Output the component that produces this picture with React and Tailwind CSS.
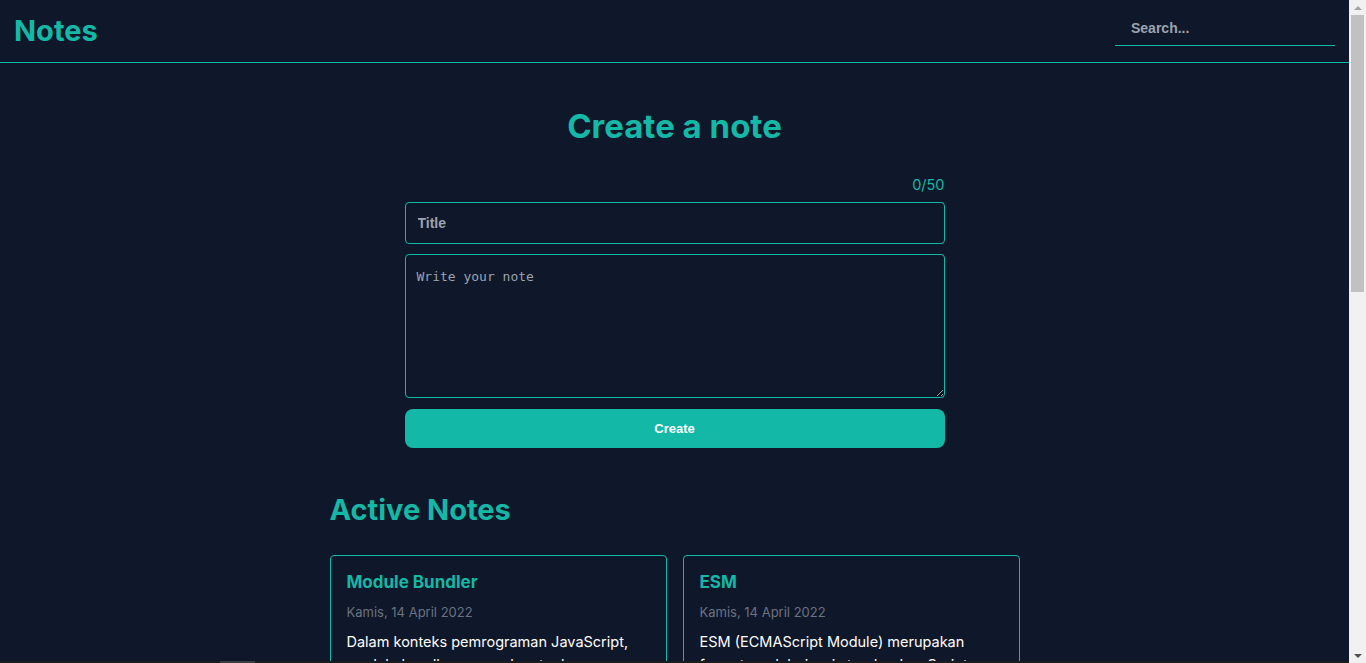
import React from "react";

const notes = [
  {
    title: "Module Bundler",
    date: "Kamis, 14 April 2022",
    body: "Dalam konteks pemrograman JavaScript, module bundler merupakan tools yang digunakan untuk menggabungkan seluruh modul JavaScript yang digunakan oleh aplikasi menjadi satu berkas.",
  },
  {
    title: "ESM",
    date: "Kamis, 14 April 2022",
    body: "ESM (ECMAScript Module) merupakan format modularisasi standar JavaScript.",
  },
  {
    title: "Functional Component",
    date: "Kamis, 14 April 2022",
    body: "Functional component merupakan React component yang dibuat menggunakan fungsi JavaScript. Agar fungsi JavaScript dapat disebut component ia harus mengembalikan React element dan dipanggil layaknya React component.",
  },
  {
    title: "Lifecycle",
    date: "Kamis, 14 April 2022",
    body: "Dalam konteks React component, lifecycle merupakan kumpulan method yang menjadi siklus hidup mulai dari component dibuat (constructor), dicetak (render), pasca-cetak (componentDidMount), dan sebagainya.",
  },
];

function Scrollbar() {
  return (
    <div className="flex h-full w-[17px] shrink-0 flex-col items-center bg-[#f1f1f1]">
      <div className="flex h-[15px] w-full items-center justify-center">
        <div className="h-0 w-0 border-x-[4px] border-b-[4px] border-x-transparent border-b-[#a3a3a3]" />
      </div>
      <div className="h-[277px] w-[13px] bg-[#c1c1c1]" />
      <div className="flex-1" />
      <div className="flex h-[15px] w-full items-center justify-center">
        <div className="h-0 w-0 border-x-[4px] border-t-[4px] border-x-transparent border-t-[#505050]" />
      </div>
    </div>
  );
}

export default function App() {
  return (
    <div className="relative flex h-screen overflow-hidden bg-[#0f172a] font-['Inter',sans-serif]">
      <div className="min-w-0 flex-1 overflow-hidden">
        <header className="flex h-[63px] items-center justify-between border-b border-[#14b8a6] px-[14px]">
          <h1 className="text-[29px] font-bold text-[#14b8a6]">Notes</h1>
          <input
            type="text"
            placeholder="Search..."
            className="mt-[-5px] h-[34px] w-[220px] border-0 border-b border-solid border-[#14b8a6] bg-transparent px-4 font-['Liberation_Sans',sans-serif] text-[14px] font-bold text-white outline-none placeholder:text-[#9ca3af]"
          />
        </header>

        <main className="flex flex-col items-center">
          <h2 className="mt-[43px] text-[33px] font-bold leading-[40px] text-[#14b8a6]">
            Create a note
          </h2>
          <div className="mt-[29px] flex w-[540px] flex-col">
            <p className="text-right text-[14.5px] leading-[20px] text-[#14b8a6]">0/50</p>
            <input
              type="text"
              placeholder="Title"
              className="mt-[7px] h-[42px] rounded-[4px] border border-[#14b8a6] bg-transparent px-3 font-['Liberation_Sans',sans-serif] text-[14px] font-bold text-white outline-none placeholder:text-[#9ca3af]"
            />
            <textarea
              placeholder="Write your note"
              className="mt-[10px] h-[144px] rounded-[4px] border border-[#14b8a6] bg-transparent px-[11px] py-[12px] font-['DejaVu_Sans_Mono',monospace] text-[13px] text-white outline-none placeholder:text-[#9ca3af]"
            />
            <button className="mt-[11px] h-[39px] rounded-[8px] bg-[#14b8a6] font-['Liberation_Sans',sans-serif] text-[13px] font-bold text-white">
              Create
            </button>
          </div>

          <section className="mt-[44px] w-[690px]">
            <h2 className="text-[29px] font-bold leading-[36px] text-[#14b8a6]">Active Notes</h2>
            <div className="mt-[27px] grid grid-cols-2 gap-4 pb-10">
              {notes.map((n) => (
                <article
                  key={n.title}
                  className="flex flex-col rounded-[4px] border border-[#14b8a6] px-4 pb-4 pt-[13px]"
                >
                  <h3 className="text-[17px] font-bold leading-[26px] text-[#14b8a6]">{n.title}</h3>
                  <p className="mt-[7px] text-[13px] leading-[20px] text-[#6b7280]">{n.date}</p>
                  <p className="mt-[8px] text-[14.5px] leading-[23px] text-white">{n.body}</p>
                  <div className="mt-4 flex gap-2">
                    <button className="flex-1 rounded-[6px] border border-red-500 py-2 text-sm font-bold text-red-500">
                      Delete
                    </button>
                    <button className="flex-1 rounded-[6px] border border-[#14b8a6] py-2 text-sm font-bold text-[#14b8a6]">
                      Archive
                    </button>
                  </div>
                </article>
              ))}
            </div>
          </section>
        </main>
      </div>
      <Scrollbar />
      <div className="absolute bottom-0 left-0 right-[17px] flex h-[2px] bg-[#1c1c1c]">
        <div className="ml-[220px] h-full w-[35px] bg-[#3c3c3c]" />
      </div>
    </div>
  );
}
